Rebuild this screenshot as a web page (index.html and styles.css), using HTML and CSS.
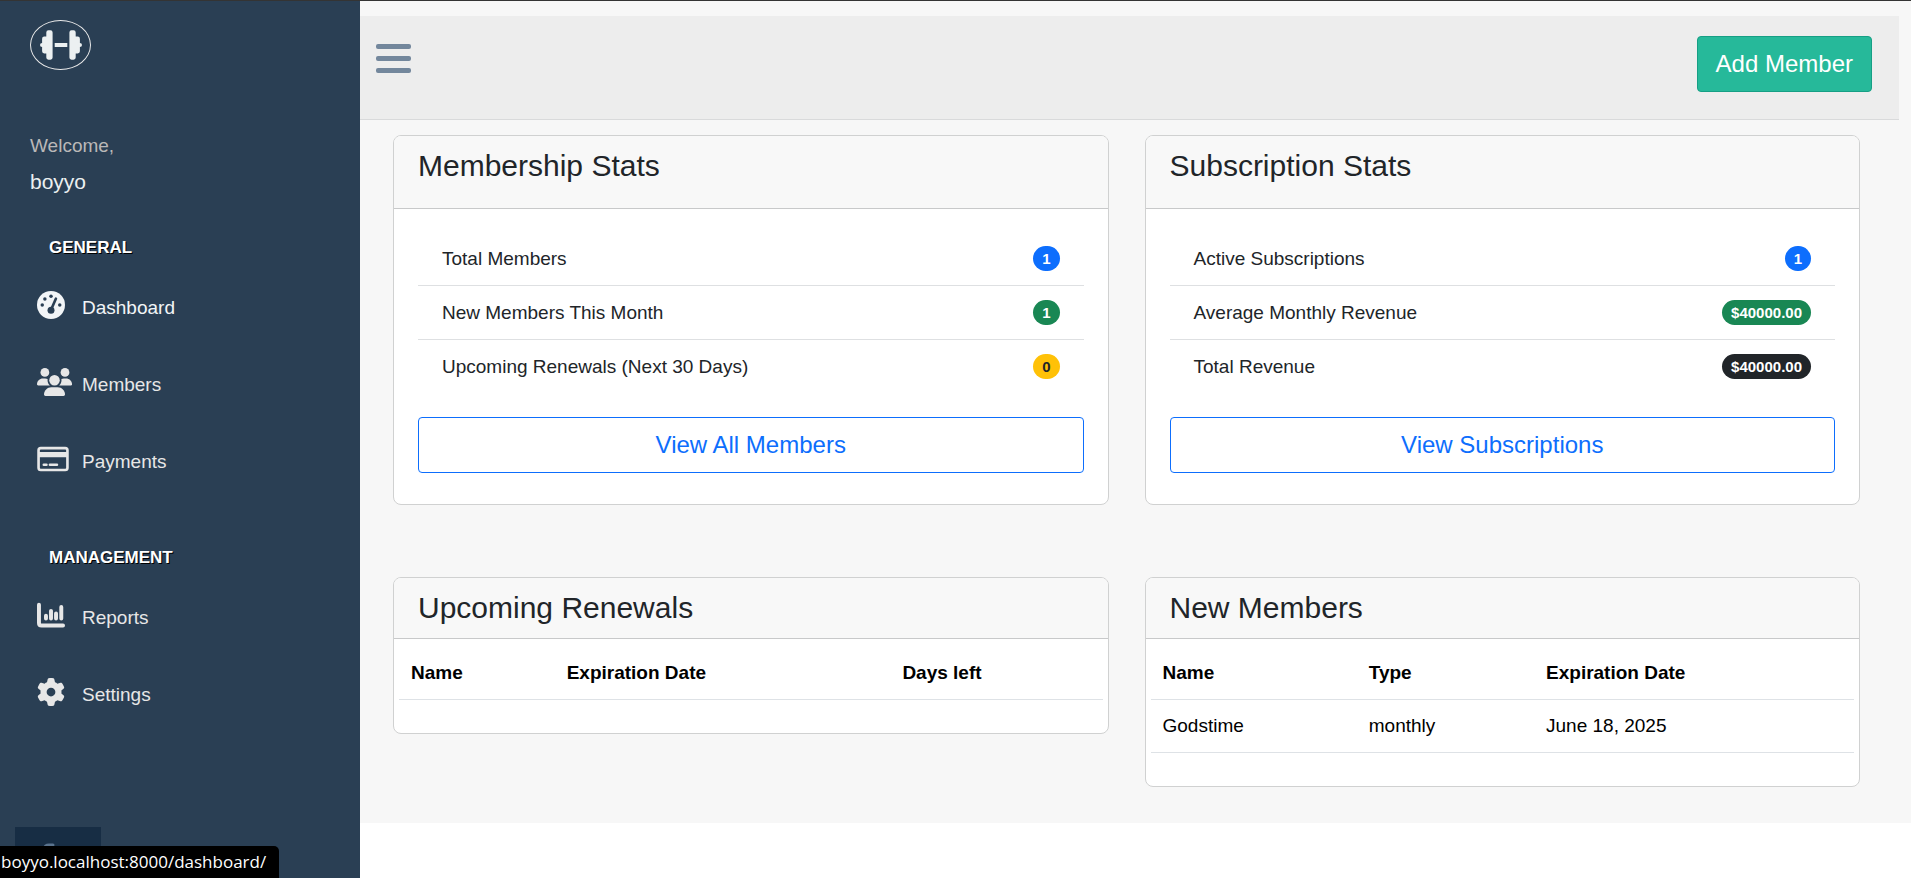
FILE: index.html
```html
<!DOCTYPE html>
<html lang="en">
<head>
<meta charset="utf-8">
<title>Dashboard</title>
<meta name="viewport" content="width=device-width, initial-scale=1">
<link rel="stylesheet" href="styles.css">
</head>
<body>
<div class="layout">
  <aside class="sidebar">
    <a class="logo" href="#" aria-label="Home">
      <svg width="42" height="34" viewBox="0 0 640 512" fill="currentColor"><path d="M96 64q0-32 32-32h32q32 0 32 32v384q0 32-32 32h-32q-32 0-32-32v-64H64q-32 0-32-32v-64q-32 0-32-32t32-32v-64q0-32 32-32h32zM544 64v64h32q32 0 32 32v64q32 0 32 32t-32 32v64q0 32-32 32h-32v64q0 32-32 32h-32q-32 0-32-32V64q0-32 32-32h32q32 0 32 32zM416 224v64H224v-64z"/></svg>
    </a>
    <div class="profile">
      <span class="profile-greeting">Welcome,</span>
      <h2 class="profile-name">boyyo</h2>
    </div>
    <nav class="menu">
      <section class="menu-section">
        <h3 class="menu-title">General</h3>
        <a class="menu-item active" href="#"><span class="menu-icon">
          <svg width="28" height="28" viewBox="0 0 512 512"><circle cx="256" cy="256" r="256" fill="currentColor"/><g class="cut"><circle cx="256" cy="96" r="32"/><circle cx="144" cy="144" r="32"/><circle cx="96" cy="256" r="32"/><circle cx="416" cy="256" r="32"/><circle cx="256" cy="352" r="64"/><path d="M325 130q9-21 30-13t14 31l-84 192-44-19z"/></g></svg></span>Dashboard</a>
        <a class="menu-item" href="#"><span class="menu-icon">
          <svg width="35" height="28" viewBox="0 0 640 512" fill="currentColor"><circle cx="144" cy="80" r="80"/><circle cx="512" cy="80" r="80"/><path d="M0 299c0-59 48-107 107-107h43c16 0 31 4 45 10-2 7-2 15-2 22 0 38 17 72 43 96H21c-12 0-21-10-21-21zM405 320c26-24 43-58 43-96 0-8-1-15-2-22 14-7 29-10 45-10h43c59 0 107 48 107 107 0 12-10 21-21 21z"/><circle cx="320" cy="224" r="96"/><path d="M128 485c0-73 60-133 133-133h118c73 0 133 60 133 133 0 15-12 27-27 27H155c-15 0-27-12-27-27z"/></svg></span>Members</a>
        <a class="menu-item" href="#"><span class="menu-icon">
          <svg width="32" height="28" viewBox="0 0 576 512"><rect x="24" y="56" width="528" height="400" rx="40" fill="none" stroke="currentColor" stroke-width="48"/><path d="M24 128h528v96H24z" fill="currentColor"/><path d="M120 360h48M232 360h128" stroke="currentColor" stroke-width="48" stroke-linecap="round"/></svg></span>Payments</a>
      </section>
      <section class="menu-section">
        <h3 class="menu-title">Management</h3>
        <a class="menu-item" href="#"><span class="menu-icon">
          <svg width="28" height="28" viewBox="0 0 512 512" fill="none" stroke="currentColor" stroke-width="72" stroke-linecap="round" stroke-linejoin="round"><path d="M36 68v332q0 48 48 48h392M164 270v50M256 180v140M348 230v90M444 110v210"/></svg></span>Reports</a>
        <a class="menu-item" href="#"><span class="menu-icon">
          <svg width="28" height="28" viewBox="0 0 512 512"><path fill="currentColor" fill-rule="evenodd" d="M495.900 166.600c3.200 8.700.5 18.400-6.400 24.600l-43.300 39.400c1.100 8.300 1.700 16.800 1.700 25.400s-.6 17.100-1.700 25.400l43.300 39.400c6.900 6.200 9.600 15.900 6.400 24.600-4.400 11.900-9.700 23.300-15.800 34.300l-4.700 8.100c-6.600 11-14 21.400-22.100 31.200-5.900 7.200-15.700 9.600-24.500 6.800l-55.700-17.700c-13.400 10.300-28.200 18.900-44 25.400l-12.500 57.100c-2 9.100-9 16.300-18.200 17.800-13.800 2.300-28 3.500-42.500 3.500s-28.700-1.200-42.500-3.500c-9.200-1.500-16.200-8.700-18.200-17.800l-12.500-57.100c-15.800-6.500-30.600-15.100-44-25.400l-55.600 17.800c-8.800 2.800-18.600.3-24.500-6.800-8.100-9.800-15.500-20.200-22.100-31.200l-4.700-8.100c-6.100-11-11.400-22.400-15.800-34.300-3.200-8.700-.5-18.400 6.400-24.600l43.300-39.400c-1.100-8.400-1.700-16.900-1.700-25.500s.6-17.100 1.700-25.400l-43.300-39.400c-6.900-6.200-9.600-15.900-6.400-24.600 4.400-11.900 9.700-23.300 15.800-34.300l4.700-8.100c6.600-11 14-21.400 22.100-31.200 5.900-7.200 15.700-9.600 24.500-6.800l55.700 17.700c13.400-10.300 28.200-18.900 44-25.400l12.500-57.100c2-9.100 9-16.300 18.200-17.800C227.300 1.200 241.500 0 256 0s28.700 1.200 42.500 3.500c9.200 1.500 16.200 8.700 18.200 17.800l12.500 57.100c15.800 6.500 30.600 15.100 44 25.400l55.700-17.700c8.800-2.800 18.600-.3 24.500 6.800 8.100 9.800 15.500 20.200 22.100 31.200l4.700 8.100c6.100 11 11.400 22.400 15.700 34.400zM256 336a80 80 0 1 0 0-160 80 80 0 1 0 0 160z"/></svg></span>Settings</a>
      </section>
    </nav>
    <a class="sidebar-action" href="#" aria-label="Log out">
      <svg width="20" height="20" viewBox="0 0 20 20" fill="none" stroke="currentColor" stroke-width="3" stroke-linecap="round"><path d="M12 2H8Q4 2 3 6v7q1 5 5 5h4"/></svg>
    </a>
  </aside>

  <main class="content">
    <header class="topbar">
      <button class="menu-toggle" type="button" aria-label="Toggle menu">
        <svg width="35" height="30" viewBox="0 0 35 30" fill="currentColor"><rect width="35" height="5" rx="2"/><rect y="12" width="35" height="5" rx="2"/><rect y="24" width="35" height="5" rx="2"/></svg>
      </button>
      <button class="btn btn-success" type="button">Add Member</button>
    </header>

    <div class="cards">
      <section class="card">
        <div class="card-header tall"><h2>Membership Stats</h2></div>
        <div class="card-body">
          <ul class="stats">
            <li>Total Members <span class="badge blue">1</span></li>
            <li>New Members This Month <span class="badge green">1</span></li>
            <li>Upcoming Renewals (Next 30 Days) <span class="badge yellow">0</span></li>
          </ul>
          <a class="btn btn-outline" href="#">View All Members</a>
        </div>
      </section>

      <section class="card">
        <div class="card-header tall"><h2>Subscription Stats</h2></div>
        <div class="card-body">
          <ul class="stats">
            <li>Active Subscriptions <span class="badge blue">1</span></li>
            <li>Average Monthly Revenue <span class="badge green">$40000.00</span></li>
            <li>Total Revenue <span class="badge dark">$40000.00</span></li>
          </ul>
          <a class="btn btn-outline" href="#">View Subscriptions</a>
        </div>
      </section>

      <section class="card">
        <div class="card-header"><h2>Upcoming Renewals</h2></div>
        <div class="card-table">
          <table>
            <thead><tr><th scope="col">Name</th><th scope="col">Expiration Date</th><th scope="col">Days left</th></tr></thead>
          </table>
        </div>
      </section>

      <section class="card">
        <div class="card-header"><h2>New Members</h2></div>
        <div class="card-table">
          <table>
            <thead><tr><th scope="col">Name</th><th scope="col">Type</th><th scope="col">Expiration Date</th></tr></thead>
            <tbody><tr><td>Godstime</td><td>monthly</td><td>June 18, 2025</td></tr></tbody>
          </table>
        </div>
      </section>
    </div>
  </main>
</div>
<div class="link-status">boyyo.localhost:8000/dashboard/</div>
</body>
</html>
```

FILE: styles.css
```css
* {
  box-sizing: border-box;
}

body {
  margin: 0;
  background: #fff;
  color: #212529;
  font: 19px/29px "Liberation Sans", Arial, sans-serif;
}

h2,
h3,
ul {
  margin: 0;
  padding: 0;
}

a {
  color: inherit;
  text-decoration: none;
}

svg {
  display: block;
}

.layout {
  display: grid;
  grid-template-columns: 360px minmax(0, 1fr);
  align-items: start;
  min-height: 100vh;
  border-top: 1px solid #343434;
}

/* Sidebar */

.sidebar {
  display: flex;
  flex-direction: column;
  align-self: stretch;
  padding-top: 19px;
  background: #2a3f54;
  color: #e7e7e7;
}

.logo {
  display: flex;
  align-items: center;
  justify-content: center;
  width: 61px;
  height: 50px;
  margin-left: 30px;
  border: 1px solid #eaeaea;
  border-radius: 50%;
  color: #ecf0f1;
}

.profile {
  padding: 61px 30px 0;
}

.profile-greeting {
  display: block;
  color: #bab8b8;
}

.profile-name {
  margin-top: 7px;
  color: #ecf0f1;
  font-size: 21px;
  font-weight: 400;
  line-height: 30px;
}

.menu {
  display: flex;
  flex-direction: column;
  gap: 48px;
  padding-top: 41px;
}

.menu-title {
  margin-bottom: 11px;
  padding-left: 49px;
  color: #fff;
  font-size: 17px;
  line-height: 20px;
  text-shadow: 1px 1px #000;
  text-transform: uppercase;
}

.menu-item {
  display: flex;
  align-items: center;
  height: 77px;
  padding-left: 37px;
}

.menu-item.active {
  color: #f2f5f7;
}

.menu-icon {
  width: 45px;
  padding-bottom: 6px;
}

.cut {
  fill: #2a3f54;
}

.sidebar-action {
  display: flex;
  justify-content: center;
  width: 86px;
  height: 51px;
  margin-top: auto;
  margin-left: 15px;
  padding: 16px 14px 0 0;
  background: #172d44;
  color: #5a738e;
}

/* Main area */

.content {
  padding: 15px 0 36px;
  background: #f7f7f7;
}

.topbar {
  display: flex;
  align-items: flex-start;
  justify-content: space-between;
  min-height: 104px;
  margin-right: 12px;
  padding: 20px 27px 20px 16px;
  border-bottom: 1px solid #d9dadb;
  background: #ededed;
}

.menu-toggle {
  padding: 8px 0;
  border: 0;
  background: none;
  color: #73879c;
}

.btn {
  display: block;
  padding: 9px 18px;
  border: 1px solid;
  border-radius: 4px;
  font: 24px/36px "Liberation Sans", Arial, sans-serif;
  text-align: center;
}

.btn-success {
  border-color: #169f85;
  background: #26b99a;
  color: #fff;
}

.btn-outline {
  border-color: #0d6efd;
  color: #0d6efd;
}

.cards {
  display: grid;
  grid-template-columns: repeat(2, minmax(0, 1fr));
  align-items: start;
  gap: 72px 36px;
  padding: 15px 51px 0 33px;
}

.card {
  overflow: hidden;
  border: 1px solid #d0d1d1;
  border-radius: 8px;
  background: #fff;
}

.card-header {
  padding: 12px 24px;
  border-bottom: 1px solid #c8c9ca;
  background: #f8f8f8;
}

.card-header.tall {
  padding-bottom: 24px;
}

.card-header h2 {
  font-size: 30px;
  font-weight: 400;
  line-height: 36px;
}

.card-body {
  padding: 23px 24px 31px;
}

.stats {
  margin-bottom: 24px;
  list-style: none;
}

.stats li {
  display: flex;
  align-items: center;
  justify-content: space-between;
  padding: 12px 24px;
  border-bottom: 1px solid #dee0e2;
}

.stats li:last-child {
  border-bottom: 0;
}

.badge {
  padding: 5px 9px;
  border-radius: 13px;
  color: #fff;
  font-size: 15px;
  font-weight: 700;
  line-height: 15px;
}

.badge.blue {
  background: #0d6efd;
}

.badge.green {
  background: #198754;
}

.badge.yellow {
  background: #ffc107;
  color: #212529;
}

.badge.dark {
  background: #212529;
}

.card-table {
  padding: 8px 5px 33px;
}

table {
  width: 100%;
  border-collapse: separate;
  border-spacing: 0;
  color: #000;
  line-height: 28px;
}

th,
td {
  padding: 12px;
  border-bottom: 1px solid #dee2e6;
  text-align: left;
}

.link-status {
  position: fixed;
  bottom: 0;
  left: 0;
  padding: 4px 13px 4px 1px;
  border-top-right-radius: 5px;
  background: #000;
  color: #fff;
  font: 17px/24px "Open Sans", sans-serif;
}
```
